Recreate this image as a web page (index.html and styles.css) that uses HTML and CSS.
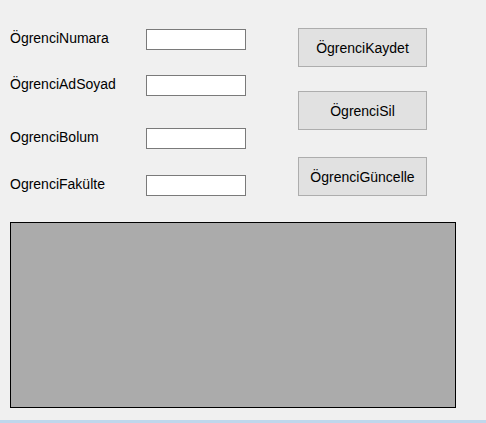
FILE: index.html
```html
<!DOCTYPE html>
<html>
<head>
<meta charset="utf-8">
<link rel="stylesheet" href="styles.css">
</head>
<body>
<div class="form">
  <div class="top">
    <div class="fields">
      <div class="row r1"><span class="label">ÖgrenciNumara</span><span class="textbox"></span></div>
      <div class="row r2"><span class="label">ÖgrenciAdSoyad</span><span class="textbox"></span></div>
      <div class="row r3"><span class="label">OgrenciBolum</span><span class="textbox"></span></div>
      <div class="row r4"><span class="label">OgrenciFakülte</span><span class="textbox"></span></div>
    </div>
    <div class="buttons">
      <div class="button b1">ÖgrenciKaydet</div>
      <div class="button b2">ÖgrenciSil</div>
      <div class="button b3">ÖgrenciGüncelle</div>
    </div>
  </div>
  <div class="grid"></div>
</div>
<div class="strip"></div>
</body>
</html>
```
FILE: styles.css
```css
html, body {
  margin: 0;
  padding: 0;
}
body {
  background: #f0f0f0;
  font-family: "Liberation Sans", Arial, sans-serif;
  font-size: 14px;
  color: #000;
  width: 486px;
  height: 423px;
  display: flex;
  flex-direction: column;
  overflow: hidden;
}
.form {
  flex: 1;
  padding-left: 10px;
}
.top {
  display: flex;
  align-items: flex-start;
}
.fields {
  display: flex;
  flex-direction: column;
  width: 236px;
}
.row {
  display: flex;
  align-items: flex-start;
  height: 21px;
}
.r1 { margin-top: 29px; }
.r2 { margin-top: 25px; }
.r3 { margin-top: 32px; }
.r4 { margin-top: 26px; }
.label {
  width: 136px;
  line-height: 16px;
  margin-top: 1px;
  white-space: nowrap;
}
.textbox {
  box-sizing: border-box;
  width: 100px;
  height: 21px;
  background: #fff;
  border: 1px solid #7a7a7a;
}
.buttons {
  display: flex;
  flex-direction: column;
  margin-left: 52px;
}
.button {
  box-sizing: border-box;
  width: 129px;
  height: 39px;
  background: #e1e1e1;
  border: 1px solid #adadad;
  display: flex;
  align-items: center;
  justify-content: center;
  line-height: 16px;
}
.b1 { margin-top: 28px; }
.b2 { margin-top: 24px; }
.b3 { margin-top: 27px; }
.grid {
  box-sizing: border-box;
  margin-top: 26px;
  width: 446px;
  height: 186px;
  background: #ababab;
  border: 1px solid #000;
}
.strip {
  height: 3px;
  background: #bfd7ec;
}
```
